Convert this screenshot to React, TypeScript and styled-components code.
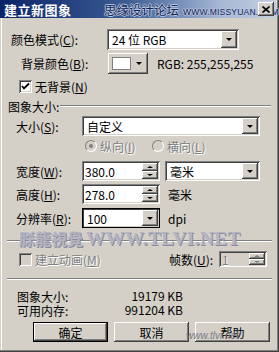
import React from "react";
import styled, { createGlobalStyle, css } from "styled-components";

const GlobalStyle = createGlobalStyle`
  html, body { margin: 0; padding: 0; }
  body {
    background: #d4d0c8;
    font-family: "Noto Sans CJK SC", sans-serif;
    font-size: 12px;
    color: #000;
    overflow: hidden;
  }
  * { box-sizing: border-box; }
`;

const raised = css`
  background: #d4d0c8;
  box-shadow: inset -1px -1px #404040, inset 1px 1px #fff, inset -2px -2px #808080, inset 2px 2px #d4d0c8;
`;

const sunken = css`
  box-shadow: inset 1px 1px #808080, inset -1px -1px #fff, inset 2px 2px #404040, inset -2px -2px #d4d0c8;
`;

const Window = styled.div`
  position: relative;
  width: 279px;
  height: 352px;
  background: #d4d0c8;
  box-shadow: inset -1px -1px #404040, inset -2px -2px #808080, inset 1px 1px #d4d0c8, inset 2px 2px #fff;
  display: flex;
  flex-direction: column;
  overflow: hidden;
`;

const TitleBar = styled.div`
  position: relative;
  height: 18px;
  margin-right: 3px;
  background: linear-gradient(to right, #0a246a 0%, #3a5a92 45%, #a6b8d6 80%, #c4cede 100%);
  display: flex;
  align-items: center;
  padding-left: 4px;
  flex-shrink: 0;
`;

const TitleText = styled.span`
  color: #fff;
  font-weight: bold;
  font-size: 13px;
  line-height: 13px;
  letter-spacing: 0.5px;
`;

const TitleMark = styled.span`
  position: absolute;
  left: 104px;
  top: 3px;
  display: flex;
  align-items: baseline;
  gap: 4px;
  color: #14265a;
  text-shadow: 1px 0 #b8c4dc, -1px 0 #b8c4dc, 0 1px #b8c4dc, 0 -1px #b8c4dc;
  white-space: nowrap;
`;

const TitleMarkCn = styled.span`
  font-size: 12.5px;
  line-height: 13px;
`;

const TitleMarkEn = styled.span`
  font-family: "Liberation Sans", sans-serif;
  font-size: 8.5px;
  line-height: 9px;
  letter-spacing: 0.2px;
`;

const CloseBtn = styled.div`
  ${raised};
  position: absolute;
  right: 2px;
  top: 2px;
  width: 16px;
  height: 14px;
  display: flex;
  align-items: center;
  justify-content: center;
`;

const Row = styled.div<{ $top: number; $left: number; $h: number }>`
  display: flex;
  align-items: center;
  margin-top: ${(p) => p.$top}px;
  padding-left: ${(p) => p.$left}px;
  height: ${(p) => p.$h}px;
  flex-shrink: 0;
  white-space: nowrap;
`;

const Label = styled.span<{ $w?: number; $disabled?: boolean }>`
  width: ${(p) => (p.$w ? `${p.$w}px` : "auto")};
  flex-shrink: 0;
  line-height: 13px;
  white-space: nowrap;
  ${(p) =>
    p.$disabled &&
    css`
      color: #808080;
      text-shadow: 1px 1px #fff;
    `}
`;

const Mn = styled.span`
  text-decoration: underline;
`;

const Select = styled.div<{ $w: number; $focus?: boolean; $gap?: number }>`
  width: ${(p) => p.$w}px;
  height: 100%;
  margin-left: ${(p) => p.$gap ?? 0}px;
  background: #fff;
  ${sunken};
  display: flex;
  align-items: stretch;
  padding: 2px;
  ${(p) =>
    p.$focus &&
    css`
      box-shadow: inset 0 0 0 1px #000, inset 2px 2px #404040, inset -2px -2px #d4d0c8;
    `}
`;

const Value = styled.span`
  flex: 1;
  display: flex;
  align-items: center;
  padding-left: 3px;
  line-height: 13px;
`;

const DropBtn = styled.span`
  ${raised};
  width: 16px;
  flex-shrink: 0;
  display: flex;
  align-items: center;
  justify-content: center;
`;

const Arrow = styled.span<{ $up?: boolean; $size?: number; $color?: string }>`
  width: 0;
  height: 0;
  border-left: ${(p) => p.$size ?? 3.5}px solid transparent;
  border-right: ${(p) => p.$size ?? 3.5}px solid transparent;
  ${(p) =>
    p.$up
      ? css`
          border-bottom: ${(p.$size ?? 3.5) - 0.5}px solid ${p.$color ?? "#000"};
        `
      : css`
          border-top: ${(p.$size ?? 3.5) - 0.5}px solid ${p.$color ?? "#000"};
        `}
`;

const ColorBtn = styled.div`
  ${raised};
  width: 40px;
  height: 100%;
  margin-left: 1px;
  display: flex;
  align-items: center;
  padding: 0 6px 0 4px;
  gap: 5px;
`;

const Swatch = styled.span`
  width: 22px;
  height: 13px;
  background: #fff;
  border: 1px solid #808080;
`;

const Note = styled.span<{ $left: number }>`
  margin-left: ${(p) => p.$left}px;
  line-height: 13px;
`;

const Check = styled.span<{ $disabled?: boolean }>`
  width: 13px;
  height: 13px;
  flex-shrink: 0;
  background: ${(p) => (p.$disabled ? "#d4d0c8" : "#fff")};
  ${sunken};
  display: flex;
  align-items: center;
  justify-content: center;
  margin-right: 3px;
`;

const GroupLine = styled.span`
  flex: 1;
  height: 2px;
  margin: 0 8px 0 1px;
  border-top: 1px solid #808080;
  border-bottom: 1px solid #fff;
`;

const Radio = styled.span<{ $checked?: boolean }>`
  position: relative;
  width: 12px;
  height: 12px;
  flex-shrink: 0;
  border-radius: 50%;
  background: #d4d0c8;
  border: 1px solid;
  border-color: #808080 #fff #fff #808080;
  margin-right: 3px;
  &::after {
    content: "";
    position: absolute;
    left: 3px;
    top: 3px;
    width: 4px;
    height: 4px;
    border-radius: 50%;
    background: ${(p) => (p.$checked ? "#808080" : "transparent")};
  }
`;

const RadioItem = styled.span<{ $w: number }>`
  width: ${(p) => p.$w}px;
  display: flex;
  align-items: center;
  flex-shrink: 0;
`;

const SpinBox = styled.div<{ $w: number; $disabled?: boolean }>`
  width: ${(p) => p.$w}px;
  height: 100%;
  background: ${(p) => (p.$disabled ? "#d4d0c8" : "#fff")};
  ${sunken};
  padding: 2px;
  display: flex;
  align-items: stretch;
  flex-shrink: 0;
`;

const SpinText = styled.span<{ $disabled?: boolean }>`
  flex: 1;
  display: flex;
  align-items: center;
  padding-left: 1px;
  line-height: 13px;
  ${(p) =>
    p.$disabled &&
    css`
      color: #808080;
      text-shadow: 1px 1px #fff;
    `}
`;

const SpinCol = styled.span`
  width: 16px;
  display: flex;
  flex-direction: column;
  flex-shrink: 0;
`;

const SpinBtn = styled.span`
  ${raised};
  flex: 1;
  display: flex;
  align-items: center;
  justify-content: center;
`;

const Separator = styled.div<{ $top: number }>`
  height: 2px;
  margin: ${(p) => p.$top}px 7px 0 7px;
  border-top: 1px solid #808080;
  border-bottom: 1px solid #fff;
  flex-shrink: 0;
`;

const InfoValue = styled.span`
  width: 66px;
  text-align: right;
  line-height: 12px;
`;

const ButtonRow = styled.div`
  display: flex;
  gap: 6px;
  margin-top: 6px;
  padding-left: 33px;
  height: 20px;
  flex-shrink: 0;
`;

const Button = styled.div<{ $default?: boolean }>`
  width: 75px;
  height: 20px;
  display: flex;
  align-items: center;
  justify-content: center;
  ${raised};
  ${(p) =>
    p.$default &&
    css`
      box-shadow: inset 0 0 0 1px #000, inset -2px -2px #404040, inset 2px 2px #fff, inset -3px -3px #808080;
    `}
`;

const WaterMark = styled.div`
  position: absolute;
  left: 19px;
  top: 230px;
  display: flex;
  align-items: baseline;
  gap: 3px;
  white-space: nowrap;
  color: #b4b4c2;
  text-shadow: 1px 1px 0 #8a8a9a;
  pointer-events: none;
`;

const WaterCn = styled.span`
  font-size: 16px;
  line-height: 16px;
  font-weight: bold;
`;

const WaterEn = styled.span`
  font-family: "Liberation Serif", serif;
  font-weight: bold;
  font-size: 19px;
  line-height: 16px;
  letter-spacing: 0.5px;
`;

const SmallMark = styled.span`
  position: absolute;
  left: 186px;
  top: 330px;
  font-family: "Liberation Sans", sans-serif;
  font-style: italic;
  font-size: 10px;
  color: #7a7a84;
  pointer-events: none;
`;

const CheckMark = () => (
  <svg width="9" height="9" viewBox="0 0 9 9">
    <path d="M1 4 L3 6.5 L8 1.5" stroke="#000" strokeWidth="1.8" fill="none" />
  </svg>
);

const CloseX = () => (
  <svg width="8" height="7" viewBox="0 0 8 7">
    <path d="M0.5 0.5 L7.5 6.5 M7.5 0.5 L0.5 6.5" stroke="#000" strokeWidth="1.6" />
  </svg>
);

export default function App() {
  return (
    <>
      <GlobalStyle />
      <Window>
        <TitleBar>
          <TitleText>建立新图象</TitleText>
          <TitleMark>
            <TitleMarkCn>思缘设计论坛</TitleMarkCn>
            <TitleMarkEn>WWW.MISSYUAN.COM</TitleMarkEn>
          </TitleMark>
          <CloseBtn>
            <CloseX />
          </CloseBtn>
        </TitleBar>

        <Row $top={11} $left={11} $h={21}>
          <Label $w={96}>
            颜色模式(<Mn>C</Mn>):
          </Label>
          <Select $w={132}>
            <Value>24 位 RGB</Value>
            <DropBtn>
              <Arrow />
            </DropBtn>
          </Select>
        </Row>

        <Row $top={3} $left={21} $h={21}>
          <Label $w={86}>
            背景颜色(<Mn>B</Mn>):
          </Label>
          <ColorBtn>
            <Swatch />
            <Arrow />
          </ColorBtn>
          <Note $left={9}>RGB: 255,255,255</Note>
        </Row>

        <Row $top={6} $left={19} $h={13}>
          <Check>
            <CheckMark />
          </Check>
          <Label>
            无背景(<Mn>N</Mn>)
          </Label>
        </Row>

        <Row $top={7} $left={8} $h={12}>
          <Label>图象大小:</Label>
          <GroupLine />
        </Row>

        <Row $top={4} $left={16} $h={20}>
          <Label $w={66}>
            大小(<Mn>S</Mn>):
          </Label>
          <Select $w={178}>
            <Value>自定义</Value>
            <DropBtn>
              <Arrow />
            </DropBtn>
          </Select>
        </Row>

        <Row $top={4} $left={85} $h={12}>
          <RadioItem $w={67}>
            <Radio $checked />
            <Label $disabled>
              纵向(<Mn>I</Mn>)
            </Label>
          </RadioItem>
          <RadioItem $w={70}>
            <Radio />
            <Label $disabled>
              横向(<Mn>L</Mn>)
            </Label>
          </RadioItem>
        </Row>

        <Row $top={9} $left={16} $h={20}>
          <Label $w={66}>
            宽度(<Mn>W</Mn>):
          </Label>
          <SpinBox $w={78}>
            <SpinText>380.0</SpinText>
            <SpinCol>
              <SpinBtn>
                <Arrow $up $size={3} />
              </SpinBtn>
              <SpinBtn>
                <Arrow $size={3} />
              </SpinBtn>
            </SpinCol>
          </SpinBox>
          <Select $w={95} $gap={5}>
            <Value>毫米</Value>
            <DropBtn>
              <Arrow />
            </DropBtn>
          </Select>
        </Row>

        <Row $top={3} $left={16} $h={20}>
          <Label $w={66}>
            高度(<Mn>H</Mn>):
          </Label>
          <SpinBox $w={78}>
            <SpinText>278.0</SpinText>
            <SpinCol>
              <SpinBtn>
                <Arrow $up $size={3} />
              </SpinBtn>
              <SpinBtn>
                <Arrow $size={3} />
              </SpinBtn>
            </SpinCol>
          </SpinBox>
          <Note $left={8}>毫米</Note>
        </Row>

        <Row $top={4} $left={16} $h={20}>
          <Label $w={66}>
            分辨率(<Mn>R</Mn>):
          </Label>
          <Select $w={78} $focus>
            <Value>100</Value>
            <DropBtn>
              <Arrow />
            </DropBtn>
          </Select>
          <Note $left={8}>dpi</Note>
        </Row>

        <Separator $top={12} />

        <Row $top={9} $left={19} $h={16}>
          <Check $disabled />
          <Label $w={134} $disabled>
            建立动画(<Mn>M</Mn>)
          </Label>
          <Label $w={50}>
            帧数(<Mn>U</Mn>):
          </Label>
          <SpinBox $w={48} $disabled>
            <SpinText $disabled>1</SpinText>
            <SpinCol>
              <SpinBtn>
                <Arrow $up $size={3} $color="#808080" />
              </SpinBtn>
              <SpinBtn>
                <Arrow $size={3} $color="#808080" />
              </SpinBtn>
            </SpinCol>
          </SpinBox>
        </Row>

        <Separator $top={11} />

        <Row $top={10} $left={17} $h={12}>
          <Label $w={100}>图象大小:</Label>
          <InfoValue>19179 KB</InfoValue>
        </Row>
        <Row $top={2} $left={17} $h={12}>
          <Label $w={100}>可用内存:</Label>
          <InfoValue>991204 KB</InfoValue>
        </Row>

        <ButtonRow>
          <Button $default>确定</Button>
          <Button>取消</Button>
          <Button>帮助</Button>
        </ButtonRow>

        <WaterMark>
          <WaterCn>脎龍視覺</WaterCn>
          <WaterEn>WWW.TLVI.NET</WaterEn>
        </WaterMark>
        <SmallMark>www.tlvi.net</SmallMark>
      </Window>
    </>
  );
}
